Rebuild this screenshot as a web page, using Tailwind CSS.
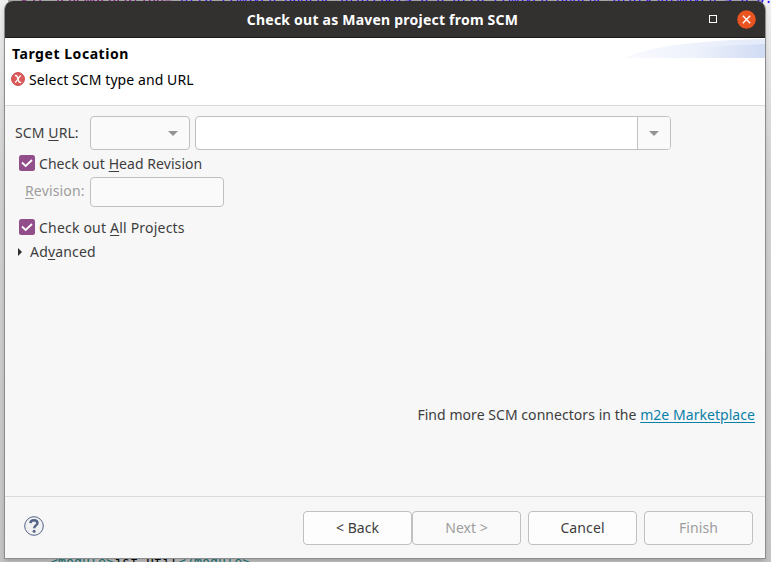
<!DOCTYPE html>
<html lang="en">
<head>
<meta charset="utf-8">
<title>Check out as Maven project from SCM</title>
<script src="https://cdn.jsdelivr.net/npm/@tailwindcss/browser@4"></script>
</head>
<body class="relative h-[562px] w-[771px] overflow-hidden bg-[#e4e4e4] font-['Noto_Sans',sans-serif] text-[14px] leading-5 text-[#3d3d3d]">
  <!-- Editor lines behind the dialog -->
  <div class="absolute inset-0 overflow-hidden bg-linear-to-b from-[#efefef] via-[#d2d2d2] via-30% to-[#c4c4c4] font-['DejaVu_Sans_Mono',monospace] text-[13.3px] leading-4 whitespace-pre">
    <div class="absolute top-0 left-2 h-1 w-[755px] bg-[#a8a8a8]"></div>
    <div class="absolute -top-[9px] left-5 text-[#7f007f]">xsi:schemaLocation=<span class="text-[#2a00ff]">"http://maven.apache.org/POM/4.0.0 http://maven.apache.org/xsd/maven-4.0.0.xsd"&gt;</span></div>
    <div class="absolute top-[555px] left-[50px] text-[#207878]">&lt;module&gt;<span class="text-black">jsf-util</span>&lt;/module&gt;</div>
  </div>

  <!-- Dialog -->
  <main class="absolute top-px left-[5px] flex h-[557px] w-[760px] flex-col rounded-t-lg bg-[#f7f7f7] shadow-[-1px_1px_0_0_#8d8d8d,1px_1px_0_0_#8d8d8d,0_3px_5px_0_#00000033]">
    <header class="relative flex h-[37px] shrink-0 items-center justify-center rounded-t-lg border-b border-[#1d1b1b] bg-[#333030] text-white">
      <h1 class="pt-px pr-[5px] text-[14px] font-bold tracking-[0.22px]">Check out as Maven project from SCM</h1>
      <div class="absolute inset-y-0 right-[9px] flex items-center gap-5">
        <span class="size-2 border border-white"></span>
        <svg class="size-[19px]" viewBox="0 0 19 19"><circle cx="9.5" cy="9.5" r="9.3" fill="#e95420"/><path d="M5.8 5.8l7.4 7.4M13.2 5.8l-7.4 7.4" stroke="#fff" stroke-width="1.4"/></svg>
      </div>
    </header>

    <section class="relative h-[68px] shrink-0 border-b border-[#dadada] bg-white pt-1.5 pl-[7px] text-black">
      <svg class="absolute top-0 right-0 h-5 w-[141px]" viewBox="0 0 141 20">
        <defs>
          <linearGradient id="a"><stop stop-color="#f8fafe"/><stop offset="1" stop-color="#e3eaf9"/></linearGradient>
          <linearGradient id="b"><stop stop-color="#fafbfe"/><stop offset=".5" stop-color="#eef2fb"/><stop offset="1" stop-color="#d0dbf4"/></linearGradient>
        </defs>
        <path d="M0 20Q38 3 141 1V20Z" fill="url(#a)"/><path d="M0 20Q50 9 141 6V20Z" fill="url(#b)"/>
      </svg>
      <h2 class="font-bold tracking-[0.55px]">Target Location</h2>
      <div class="mt-[5px] flex items-center gap-1">
        <svg class="-mt-px -ml-px size-[14px]" viewBox="0 0 14 14"><circle cx="7" cy="7" r="6.4" fill="#dc5b5b" stroke="#c94347"/><path d="M3.9 3.8Q5.4 3 6.3 5L7.7 9Q8.5 11 10.1 10.1M10 3.6Q8.8 3.8 7 7T4 10.4" fill="none" stroke="#fff" stroke-width="1.4"/></svg>
        <p class="pt-px tracking-[0.08px]">Select SCM type and URL</p>
      </div>
    </section>

    <section class="relative flex-1">
      <div class="flex items-center pt-2.5 pl-2.5">
        <label class="w-[75px] tracking-[0.1px]">SCM <u class="underline-offset-2">U</u>RL:</label>
        <div class="flex h-[34px] w-[100px] items-center justify-end rounded-[4px] border border-[#c0c0c0] bg-[#fafafa] pr-[11px]">
          <svg class="h-[5px] w-[10px]" viewBox="0 0 10 5"><path d="M0 0h10L5 5z" fill="#949494"/></svg>
        </div>
        <div class="ml-[5px] flex h-[34px] w-[476px] overflow-hidden rounded-[4px] border border-[#c0c0c0] bg-white">
          <div class="flex-1"></div>
          <div class="flex w-[33px] items-center justify-center border-l border-[#c0c0c0] bg-[#fafafa]">
            <svg class="h-[5px] w-[10px]" viewBox="0 0 10 5"><path d="M0 0h10L5 5z" fill="#949494"/></svg>
          </div>
        </div>
      </div>
      <div class="mt-1 flex items-center gap-1 pl-[14px]">
        <svg class="-mt-0.5 size-4" viewBox="0 0 16 16"><rect width="16" height="16" rx="2.5" fill="#924d8b"/><path d="M3 7.5l3.7 3.5L13 5" fill="none" stroke="#fff" stroke-width="1.8"/></svg>
        <span class="tracking-[0.06px]">Check out <u class="underline-offset-2">H</u>ead Revision</span>
      </div>
      <div class="mt-[3px] flex pl-5">
        <label class="w-[65px] pt-1 tracking-[0.15px] text-[#9d9d9d]"><u class="underline-offset-2">R</u>evision:</label>
        <div class="h-[30px] w-[134px] rounded-[4px] border border-[#c0c0c0] bg-[#fafafa]"></div>
      </div>
      <div class="mt-[11px] flex items-center gap-1 pl-[14px]">
        <svg class="-mt-0.5 size-4" viewBox="0 0 16 16"><rect width="16" height="16" rx="2.5" fill="#924d8b"/><path d="M3 7.5l3.7 3.5L13 5" fill="none" stroke="#fff" stroke-width="1.8"/></svg>
        <span class="tracking-[0.2px]">Check out <u class="underline-offset-2">A</u>ll Projects</span>
      </div>
      <div class="mt-1 flex items-center gap-2 pl-[13px]">
        <svg class="-mt-px h-2 w-1" viewBox="0 0 4 8"><path d="M0 0l4 4-4 4z" fill="#303030"/></svg>
        <span class="tracking-[0.18px]">Ad<u class="underline-offset-2">v</u>anced</span>
      </div>
      <p class="mt-[143px] pr-[10px] text-right tracking-[0.05px]">Find more SCM connectors in the <a class="text-[#0c7fa9] underline underline-offset-2">m2e Marketplace</a></p>
    </section>

    <footer class="flex h-[62px] shrink-0 items-start border-t border-[#dadada] pt-3.5 pr-3 pl-[19px]">
      <svg class="mt-[5px] size-5" viewBox="0 0 20 20"><circle cx="10" cy="10" r="9.3" fill="#f1f1f1" stroke="#526387"/><path d="M6.4 7.2Q6.6 4.3 10 4.3T13.5 7.1C13.5 9.5 10.2 9.3 10.2 12.2" fill="none" stroke="#526387" stroke-width="2.4"/><circle cx="10.1" cy="15.2" r="1.5" fill="#526387"/></svg>
      <div class="ml-auto flex">
        <button class="h-[34px] w-[109px] rounded-[4px] border border-[#c0c0c0] bg-[#fdfdfd]">&lt; Back</button>
        <button class="h-[34px] w-[109px] rounded-[4px] border border-[#c0c0c0] bg-[#fafafa] text-[#9d9d9d]">Next &gt;</button>
        <button class="ml-[7px] h-[34px] w-[109px] rounded-[4px] border border-[#c0c0c0] bg-[#fdfdfd] tracking-[0.1px]">Cancel</button>
        <button class="ml-[7px] h-[34px] w-[109px] rounded-[4px] border border-[#c0c0c0] bg-[#fafafa] tracking-[0.1px] text-[#9d9d9d]">Finish</button>
      </div>
    </footer>
  </main>
</body>
</html>
